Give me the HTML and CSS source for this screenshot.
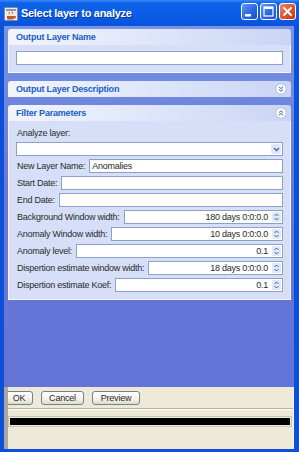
FILE: index.html
```html
<!DOCTYPE html>
<html lang="en">
<head>
    <meta charset="UTF-8">
    <title>Select layer to analyze</title>
    <link rel="stylesheet" href="styles.css">
</head>
<body>
    <div class="window">
        <div class="titlebar">
            <svg class="app-icon" width="16" height="16" viewBox="0 0 16 16">
                <rect x="1.5" y="1.5" width="13" height="13" rx="1" fill="#eeece4" stroke="#8a8a8a"/>
                <rect x="3" y="3" width="10" height="2" fill="#7f97c6"/>
                <path d="M5.5 6.5 C6.5 5.5 7 7.5 6 8.5 M8.5 6 C9.5 5 10 7 9 8" stroke="#d4582c" fill="none"/>
                <path d="M4 10 h7 v2 c0 1 -1 1.5 -2 1.5 h-3 c-1 0 -2 -0.5 -2 -1.5z" fill="#b85a3a"/>
                <path d="M11 10.5 h1.5 v1.5 h-1.5" stroke="#b85a3a" fill="none"/>
            </svg>
            <span class="title">Select layer to analyze</span>
            <div class="win-buttons">
                <div class="wbtn">
                    <svg width="15" height="15" viewBox="0 0 15 15"><rect x="3" y="10" width="6" height="2.5" fill="#fff"/></svg>
                </div>
                <div class="wbtn">
                    <svg width="15" height="15" viewBox="0 0 15 15"><rect x="3" y="3" width="9" height="9" fill="none" stroke="#fff" stroke-width="1.2"/><rect x="3" y="3" width="9" height="2" fill="#fff"/></svg>
                </div>
                <div class="wbtn close">
                    <svg width="15" height="15" viewBox="0 0 15 15"><path d="M4 4 L11 11 M11 4 L4 11" stroke="#fff" stroke-width="2" stroke-linecap="round"/></svg>
                </div>
            </div>
        </div>

        <div class="client">
            <div class="pane">
                <div class="panel">
                    <div class="panel-header">Output Layer Name</div>
                    <div class="panel-body">
                        <div class="field"></div>
                    </div>
                </div>

                <div class="panel">
                    <div class="panel-header">
                        Output Layer Description
                        <svg class="toggle" width="12" height="12" viewBox="0 0 12 12">
                            <circle cx="6" cy="6" r="5.3" fill="#fbfcff" stroke="#b3c0e2"/>
                            <path d="M4 3.8 L6 5.6 L8 3.8 M4 6.4 L6 8.2 L8 6.4" stroke="#4a5f99" fill="none" stroke-width="1"/>
                        </svg>
                    </div>
                </div>

                <div class="panel">
                    <div class="panel-header">
                        Filter Parameters
                        <svg class="toggle" width="12" height="12" viewBox="0 0 12 12">
                            <circle cx="6" cy="6" r="5.3" fill="#fbfcff" stroke="#b3c0e2"/>
                            <path d="M4 5.6 L6 3.8 L8 5.6 M4 8.2 L6 6.4 L8 8.2" stroke="#4a5f99" fill="none" stroke-width="1"/>
                        </svg>
                    </div>
                    <div class="panel-body">
                        <div class="label-line">Analyze layer:</div>
                        <div class="field combo">
                            <span class="combo-btn">
                                <svg width="7" height="5" viewBox="0 0 7 5"><path d="M1 1 L3.5 3.5 L6 1" stroke="#4d6185" stroke-width="1.3" fill="none"/></svg>
                            </span>
                        </div>
                        <div class="row"><span class="lbl">New Layer Name:</span><div class="field">Anomalies</div></div>
                        <div class="row"><span class="lbl">Start Date:</span><div class="field"></div></div>
                        <div class="row"><span class="lbl">End Date:</span><div class="field"></div></div>
                        <div class="row"><span class="lbl">Background Window width:</span><div class="field spin"><span class="val">180 days 0:0:0.0</span><span class="spin-btn"><svg width="9" height="10" viewBox="0 0 9 10"><path d="M2.5 4 L4.5 2 L6.5 4 M2.5 6 L4.5 8 L6.5 6" stroke="#4d6185" fill="none"/></svg></span></div></div>
                        <div class="row"><span class="lbl">Anomaly Window width:</span><div class="field spin"><span class="val">10 days 0:0:0.0</span><span class="spin-btn"><svg width="9" height="10" viewBox="0 0 9 10"><path d="M2.5 4 L4.5 2 L6.5 4 M2.5 6 L4.5 8 L6.5 6" stroke="#4d6185" fill="none"/></svg></span></div></div>
                        <div class="row"><span class="lbl">Anomaly level:</span><div class="field spin"><span class="val">0.1</span><span class="spin-btn"><svg width="9" height="10" viewBox="0 0 9 10"><path d="M2.5 4 L4.5 2 L6.5 4 M2.5 6 L4.5 8 L6.5 6" stroke="#4d6185" fill="none"/></svg></span></div></div>
                        <div class="row"><span class="lbl">Dispertion estimate window width:</span><div class="field spin"><span class="val">18 days 0:0:0.0</span><span class="spin-btn"><svg width="9" height="10" viewBox="0 0 9 10"><path d="M2.5 4 L4.5 2 L6.5 4 M2.5 6 L4.5 8 L6.5 6" stroke="#4d6185" fill="none"/></svg></span></div></div>
                        <div class="row"><span class="lbl">Dispertion estimate Koef:</span><div class="field spin"><span class="val">0.1</span><span class="spin-btn"><svg width="9" height="10" viewBox="0 0 9 10"><path d="M2.5 4 L4.5 2 L6.5 4 M2.5 6 L4.5 8 L6.5 6" stroke="#4d6185" fill="none"/></svg></span></div></div>
                    </div>
                </div>
            </div>

            <div class="footer">
                <div class="strip"></div>
                <div class="footer-main">
                    <div class="buttons">
                        <button class="btn btn-ok">OK</button>
                        <button class="btn btn-cancel">Cancel</button>
                        <button class="btn btn-preview">Preview</button>
                    </div>
                    <div class="separator"></div>
                    <div class="progress"><div class="progress-bar"></div></div>
                </div>
            </div>
        </div>
    </div>
</body>
</html>
```

FILE: styles.css
```css
html, body {
    margin: 0;
    padding: 0;
}

body {
    width: 299px;
    height: 452px;
    overflow: hidden;
    font-family: "Liberation Sans", Arial, sans-serif;
    font-size: 9px;
    letter-spacing: -0.25px;
    color: #2a2a2a;
}

.window {
    width: 299px;
    height: 452px;
    display: flex;
    flex-direction: column;
    background: #0b50d6;
}

.titlebar {
    height: 26px;
    flex: none;
    display: flex;
    align-items: center;
    padding: 0 3px;
    background: linear-gradient(#3a86f6 0%, #0d62ea 12%, #0a5ce6 60%, #0853db 100%);
    color: #fff;
}

.app-icon {
    flex: none;
    margin-top: 1px;
}

.title {
    margin-left: 2px;
    font-size: 11px;
    font-weight: bold;
    letter-spacing: -0.3px;
    text-shadow: 1px 1px 0 #0a3a9c;
}

.win-buttons {
    margin-left: auto;
    display: flex;
    gap: 2px;
    margin-top: -3px;
}

.wbtn {
    width: 15px;
    height: 15px;
    border: 1px solid #fff;
    border-radius: 3px;
    background: linear-gradient(135deg, #5c9af8, #2563e6 60%, #1c4fd0);
    display: flex;
}

.wbtn.close {
    background: linear-gradient(135deg, #f08a6a, #e0502c 55%, #c63c1c);
}

.client {
    flex: 1;
    display: flex;
    flex-direction: column;
    margin: 0 5px 3px 4px;
}

.pane {
    flex: 1;
    display: flex;
    flex-direction: column;
    gap: 8px;
    padding: 3px 3px 0 4px;
    background: linear-gradient(#7894e2, #6677d8 45%, #6474d6);
}

.panel {
    display: flex;
    flex-direction: column;
}

.panel-header {
    height: 16px;
    display: flex;
    align-items: center;
    padding: 0 4px 0 8px;
    border-radius: 3px 3px 0 0;
    background: linear-gradient(to right, #f2f5fd, #dfe6f9 50%, #c9d5f5);
    color: #215dc6;
    font-weight: bold;
    letter-spacing: -0.2px;
}

.toggle {
    margin-left: auto;
}

.panel-body {
    display: flex;
    flex-direction: column;
    padding: 6px 7px 7px 7px;
    background: #d6dff7;
    border: 1px solid #f4f7fd;
    border-top: none;
}

.field {
    height: 14px;
    box-sizing: border-box;
    border: 1px solid #8aa2c6;
    background: #fff;
    display: flex;
    align-items: center;
    padding: 0 2px;
    flex: 1;
    min-width: 0;
}

.panel-body > .field {
    flex: none;
}

.label-line {
    height: 12px;
    line-height: 12px;
    margin-bottom: 3px;
    padding-left: 1px;
}

.combo {
    justify-content: flex-end;
    padding: 0 1px;
}

.combo-btn {
    width: 10px;
    height: 10px;
    display: flex;
    align-items: center;
    justify-content: center;
    background: #dfe7fb;
    border-radius: 2px;
}

.row {
    display: flex;
    align-items: center;
    gap: 4px;
    margin-top: 3px;
}

.lbl {
    padding-left: 1px;
    white-space: nowrap;
}

.spin {
    justify-content: flex-end;
    padding: 0 1px 0 2px;
}

.val {
    margin-right: 4px;
}

.spin-btn {
    width: 9px;
    height: 10px;
    display: flex;
    background: #dfe7fb;
    border-radius: 2px;
}

.footer {
    height: 62px;
    flex: none;
    display: flex;
    background: #ece9d8;
}

.strip {
    width: 4px;
    background: #a8a8a0;
}

.footer-main {
    flex: 1;
    display: flex;
    flex-direction: column;
    overflow: hidden;
    border-right: 1px solid #f4f2ea;
}

.buttons {
    display: flex;
    gap: 8px;
    padding-top: 4px;
    margin-left: -3px;
}

.btn {
    height: 14px;
    padding: 0;
    border: 1px solid #7b7f8a;
    border-radius: 3px;
    background: linear-gradient(#ffffff, #f2f1ea 60%, #dedbcd);
    font-family: "Liberation Sans", Arial, sans-serif;
    font-size: 9px;
    letter-spacing: -0.2px;
    color: #2a2a2a;
}

.btn-ok {
    width: 28px;
}

.btn-cancel {
    width: 43px;
}

.btn-preview {
    width: 48px;
}

.separator {
    margin-top: 3px;
    border-top: 1px solid #b8b4a2;
    border-bottom: 1px solid #fff;
}

.progress {
    margin: 6px 1px 0 0;
    height: 11px;
    box-sizing: border-box;
    border: 1px solid #c8c5b4;
    padding: 1px;
}

.progress-bar {
    height: 100%;
    background: #000;
}
```
